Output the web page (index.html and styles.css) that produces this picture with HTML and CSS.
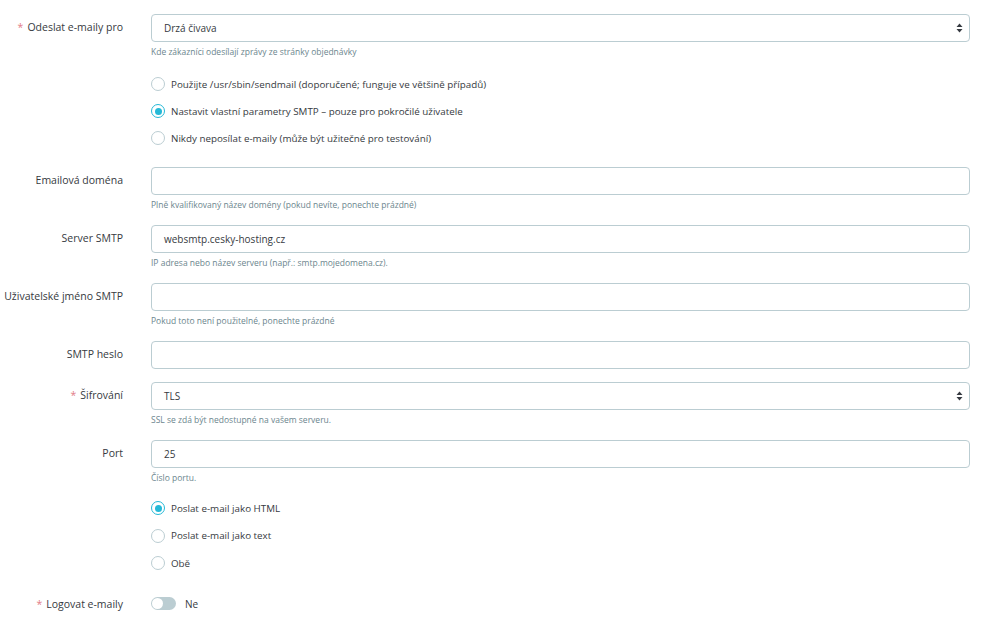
FILE: index.html
```html
<!DOCTYPE html>
<html lang="cs">
<head>
<meta charset="utf-8">
<title>E-mail</title>
<link rel="stylesheet" href="styles.css">
</head>
<body>
<form class="form">
  <div class="row first-row">
    <label class="lbl"><span class="req">*</span>Odeslat e-maily pro</label>
    <div class="ctl">
      <div class="select"><span>Drzá čivava</span>
        <svg class="arrows" width="7" height="10" viewBox="0 0 7 10"><path d="M3.5 0.5 L6.5 4 H0.5 Z M3.5 9.5 L6.5 6 H0.5 Z" fill="#363a41"/></svg>
      </div>
      <div class="help">Kde zákazníci odesílají zprávy ze stránky objednávky</div>
    </div>
  </div>

  <div class="row radios-row">
    <div class="lbl"></div>
    <div class="ctl">
      <div class="radio"><span class="rb"></span>Použijte /usr/sbin/sendmail (doporučené; funguje ve většině případů)</div>
      <div class="radio"><span class="rb on"></span>Nastavit vlastní parametry SMTP – pouze pro pokročilé uživatele</div>
      <div class="radio"><span class="rb"></span>Nikdy neposílat e-maily (může být užitečné pro testování)</div>
    </div>
  </div>

  <div class="row">
    <label class="lbl">Emailová doména</label>
    <div class="ctl">
      <div class="input"></div>
      <div class="help">Plně kvalifikovaný název domény (pokud nevíte, ponechte prázdné)</div>
    </div>
  </div>

  <div class="row">
    <label class="lbl">Server SMTP</label>
    <div class="ctl">
      <div class="input">websmtp.cesky-hosting.cz</div>
      <div class="help">IP adresa nebo název serveru (např.: smtp.mojedomena.cz).</div>
    </div>
  </div>

  <div class="row">
    <label class="lbl">Uživatelské jméno SMTP</label>
    <div class="ctl">
      <div class="input"></div>
      <div class="help">Pokud toto není použitelné, ponechte prázdné</div>
    </div>
  </div>

  <div class="row nohelp-row">
    <label class="lbl">SMTP heslo</label>
    <div class="ctl">
      <div class="input"></div>
    </div>
  </div>

  <div class="row">
    <label class="lbl"><span class="req">*</span>Šifrování</label>
    <div class="ctl">
      <div class="select"><span>TLS</span>
        <svg class="arrows" width="7" height="10" viewBox="0 0 7 10"><path d="M3.5 0.5 L6.5 4 H0.5 Z M3.5 9.5 L6.5 6 H0.5 Z" fill="#363a41"/></svg>
      </div>
      <div class="help">SSL se zdá být nedostupné na vašem serveru.</div>
    </div>
  </div>

  <div class="row port-row">
    <label class="lbl">Port</label>
    <div class="ctl">
      <div class="input">25</div>
      <div class="help">Číslo portu.</div>
    </div>
  </div>

  <div class="row radios-row2">
    <div class="lbl"></div>
    <div class="ctl">
      <div class="radio"><span class="rb on"></span>Poslat e-mail jako HTML</div>
      <div class="radio"><span class="rb"></span>Poslat e-mail jako text</div>
      <div class="radio"><span class="rb"></span>Obě</div>
    </div>
  </div>

  <div class="row toggle-row">
    <label class="lbl"><span class="req">*</span>Logovat e-maily</label>
    <div class="ctl switch-ctl">
      <span class="switch"><span class="knob"></span></span>
      <span class="switch-txt">Ne</span>
    </div>
  </div>
</form>
</body>
</html>
```
FILE: styles.css
```css
* { box-sizing: border-box; }
html, body { margin: 0; padding: 0; background: #fff; }
body {
  font-family: "Open Sans", "Noto Sans", sans-serif;
  font-size: 10.5px;
  color: #363a41;
}
.form { padding: 14px 30px 0 0; }
.row {
  display: grid;
  grid-template-columns: 123px 1fr;
  column-gap: 28px;
  margin-bottom: 14px;
}
.first-row { margin-bottom: 12.5px; }
.nohelp-row { margin-bottom: 12.5px; }
.port-row { margin-bottom: 11px; }
.lbl {
  text-align: right;
  padding-top: 5px;
  line-height: 16px;
  white-space: nowrap;
}
.req { color: #e27c86; margin-right: 4px; }
.select, .input {
  height: 28px;
  border: 1px solid #bbcdd2;
  border-radius: 4px;
  padding: 0 12px;
  display: flex;
  align-items: center;
  justify-content: space-between;
  line-height: 26px;
  font-size: 10px;
}
.arrows { margin-right: -6px; }
.help {
  font-size: 8.5px;
  color: #6c868e;
  margin-top: 4px;
  line-height: 12px;
}
.radios-row { margin-bottom: 15.5px; }
.radios-row .ctl, .radios-row2 .ctl { display: flex; flex-direction: column; }
.radio {
  height: 27px;
  display: flex;
  align-items: center;
  gap: 6px;
  font-size: 9.8px;
}
.radios-row2 .radio { height: 27.5px; }
.rb {
  width: 14px; height: 14px;
  border: 1px solid #bbcdd2;
  border-radius: 50%;
  position: relative;
  flex: none;
}
.rb.on { border: 1.5px solid #25b9d7; }
.rb.on::after {
  content: "";
  position: absolute;
  left: 50%; top: 50%;
  width: 7px; height: 7px;
  margin: -3.5px 0 0 -3.5px;
  border-radius: 50%;
  background: #25b9d7;
}
.radios-row2 { margin-bottom: 13.5px; }
.switch-ctl { display: flex; align-items: center; gap: 9px; height: 26px; }
.switch {
  width: 25px; height: 13px;
  border-radius: 7px;
  background: #bbcdd2;
  position: relative;
}
.knob {
  position: absolute;
  left: 1px; top: 1px;
  width: 11px; height: 11px;
  border-radius: 50%;
  background: #fff;
}
.switch-txt { line-height: 16px; font-size: 10px; }
```
